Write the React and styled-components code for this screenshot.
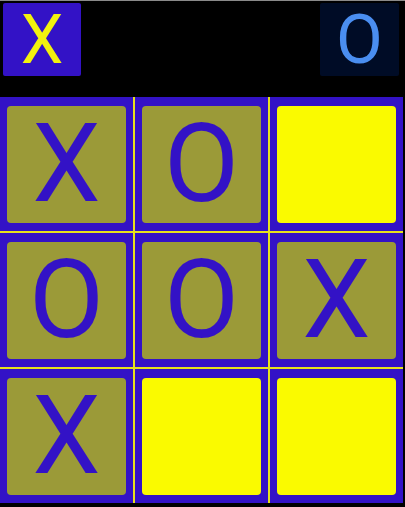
import React from 'react'
import styled, { createGlobalStyle } from 'styled-components'

const GlobalStyle = createGlobalStyle`
  html, body {
    margin: 0;
    padding: 0;
    background: #000;
  }
  body {
    font-family: Roboto, "Liberation Sans", sans-serif;
  }
`

const Screen = styled.div`
  width: 405px;
  height: 507px;
  background: #000;
  border-top: 1px solid #8a8a8a;
  box-sizing: border-box;
  overflow: hidden;
`

const Header = styled.div`
  display: flex;
  justify-content: space-between;
  padding: 2px 6px 0 3px;
  height: 96px;
  box-sizing: border-box;
`

const PlayerBadge = styled.div`
  width: ${p => p.$w}px;
  height: 73px;
  border-radius: 2px;
  background: ${p => p.$bg};
  color: ${p => p.$color};
  display: flex;
  align-items: center;
  justify-content: center;
  font-size: 68px;
  line-height: 1;
`

const Board = styled.div`
  display: grid;
  grid-template-columns: repeat(3, 133px);
  grid-template-rows: repeat(3, 134px);
  gap: 2px;
  background: #e6e21c;
  width: 403px;
`

const Cell = styled.div`
  background: #3312c6;
  padding: 9px 7px 8px 7px;
  box-sizing: border-box;
  display: flex;
`

const Tile = styled.div`
  flex: 1;
  border-radius: 4px;
  background: ${p => (p.$mark ? '#9b9a38' : '#fafa00')};
  color: #3312c6;
  display: flex;
  align-items: center;
  justify-content: center;
  font-size: 109px;
  line-height: 1;
`

const board = ['X', 'O', '', 'O', 'O', 'X', 'X', '', '']

const App = () => {
  return (
    <Screen>
      <GlobalStyle />
      <Header>
        <PlayerBadge $w={78} $bg="#3312c6" $color="#f2f20e">X</PlayerBadge>
        <PlayerBadge $w={79} $bg="#000c26" $color="#4a8ef0">O</PlayerBadge>
      </Header>
      <Board>
        {board.map((mark, i) => (
          <Cell key={i}>
            <Tile $mark={mark}>{mark}</Tile>
          </Cell>
        ))}
      </Board>
    </Screen>
  )
}

export default App
